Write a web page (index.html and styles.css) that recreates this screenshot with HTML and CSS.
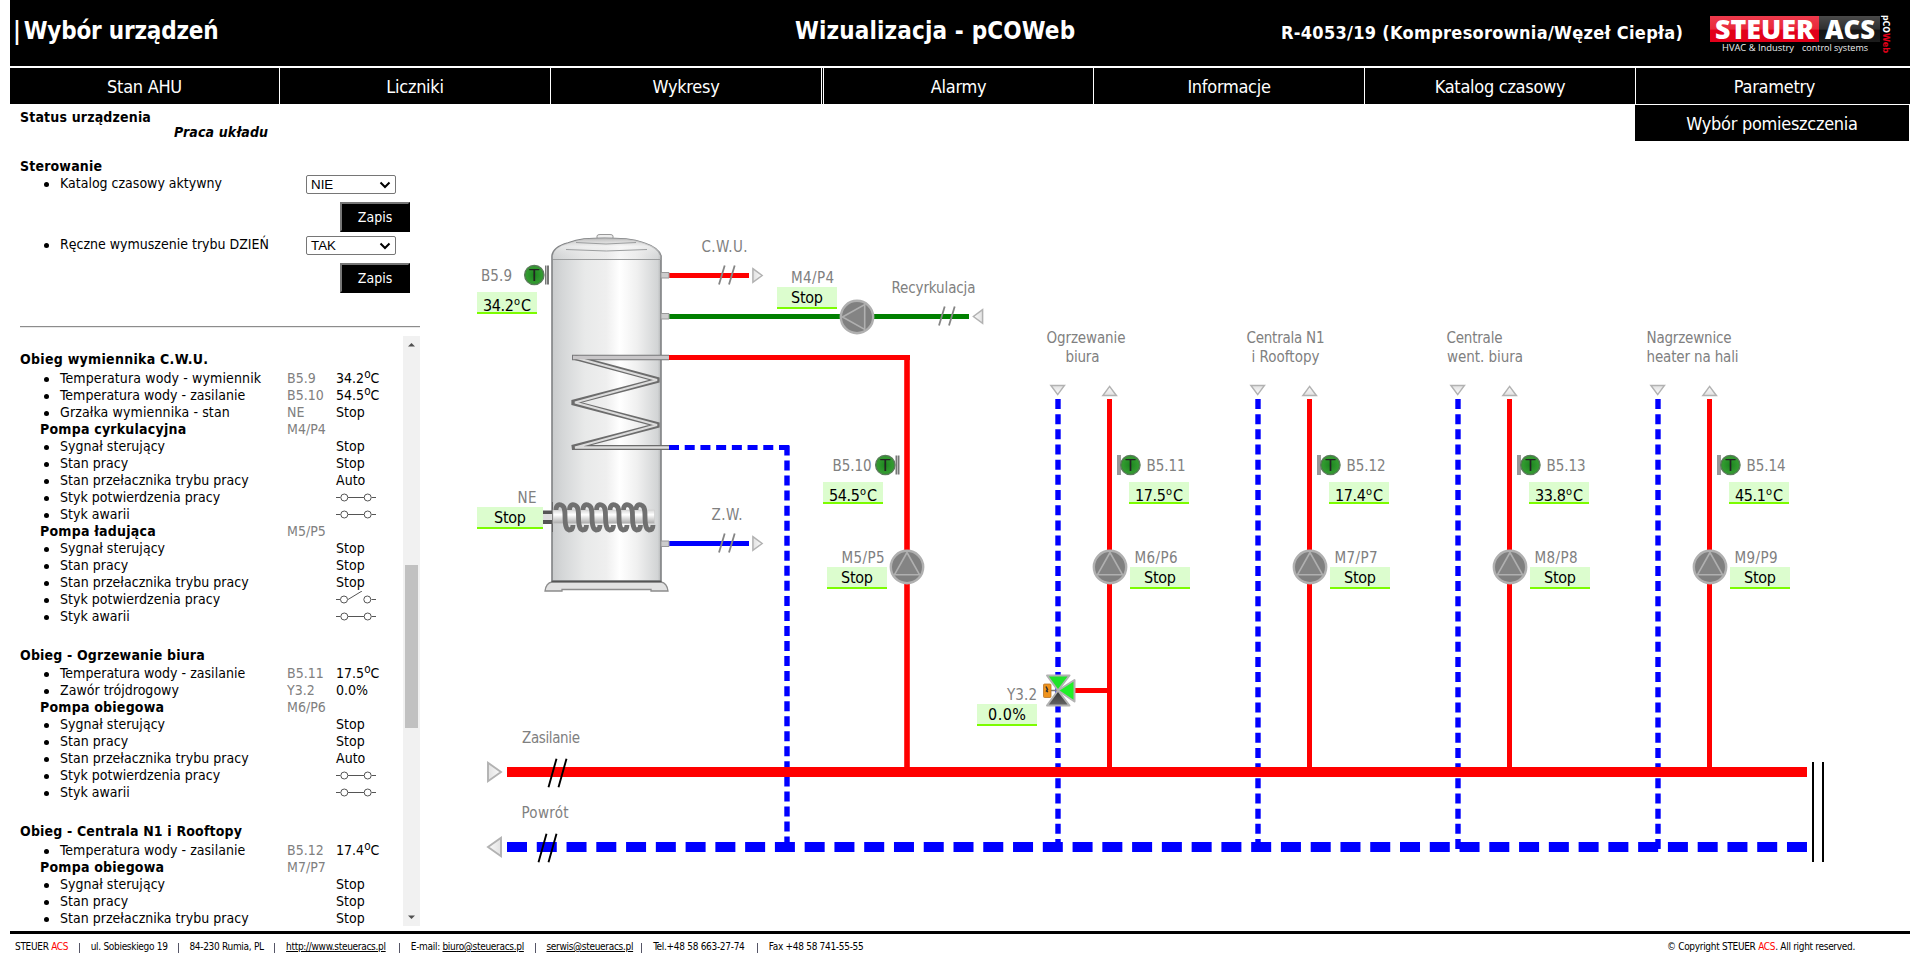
FILE: index.html
```html
<!DOCTYPE html>
<html lang="pl">
<head>
<meta charset="utf-8">
<title>Wizualizacja - pCOWeb</title>
<link rel="stylesheet" href="styles.css">
</head>
<body>
<header class="top">
  <div class="top-left"><span class="pipe">|</span>Wybór urządzeń</div>
  <div class="top-title">Wizualizacja - pCOWeb</div>
  <div class="top-device">R-4053/19 (Kompresorownia/Węzeł Ciepła)</div>
  <svg class="logo" width="190" height="46" viewBox="1705 11 190 46">
    <defs>
      <linearGradient id="lr" x1="0" y1="0" x2="0" y2="1"><stop offset="0" stop-color="#ee3a4c"/><stop offset=".5" stop-color="#e8293b"/><stop offset=".55" stop-color="#e2001a"/><stop offset="1" stop-color="#e2001a"/></linearGradient>
      <linearGradient id="lb" x1="0" y1="0" x2="0" y2="1"><stop offset="0" stop-color="#4a4a4a"/><stop offset=".5" stop-color="#303030"/><stop offset=".55" stop-color="#151515"/><stop offset="1" stop-color="#1c1c1c"/></linearGradient>
    </defs>
    <rect x="1710" y="16" width="109" height="26" fill="url(#lr)"/>
    <rect x="1819" y="16" width="61" height="26" fill="url(#lb)"/>
    <text class="logo-name" x="1715" y="38.5" textLength="99" lengthAdjust="spacingAndGlyphs">STEUER</text>
    <text class="logo-name" x="1825" y="38.5" textLength="50" lengthAdjust="spacingAndGlyphs">ACS</text>
    <text class="logo-sub" x="1722" y="50.5" textLength="72" lengthAdjust="spacingAndGlyphs">HVAC &amp; Industry</text>
    <text class="logo-sub" x="1802" y="50.5" textLength="66" lengthAdjust="spacingAndGlyphs">control systems</text>
    <text class="logo-web" transform="translate(1882.5 15) rotate(90)"><tspan textLength="18" lengthAdjust="spacingAndGlyphs">pCO</tspan><tspan fill="#e2001a" textLength="20" lengthAdjust="spacingAndGlyphs">Web</tspan></text>
  </svg>
</header>
<nav class="menu">
  <a class="m1">Stan AHU</a><a>Liczniki</a><a>Wykresy</a><a class="m4">Alarmy</a><a>Informacje</a><a>Katalog czasowy</a><a class="m7">Parametry</a>
  <a class="submenu">Wybór pomieszczenia</a>
</nav>
<main class="main">
  <aside class="side">
    <section class="control">
      <h2>Status urządzenia</h2>
      <p class="status">Praca układu</p>
      <h2 class="ster">Sterowanie</h2>
      <div class="ctl"><span class="dot"></span><label>Katalog czasowy aktywny</label><span class="select">NIE<svg width="12" height="8" viewBox="0 0 12 8"><path d="M1.5 1.5 6 6l4.500-4.500" fill="none" stroke="#000" stroke-width="2"/></svg></span></div>
      <button class="save">Zapis</button>
      <div class="ctl"><span class="dot"></span><label>Ręczne wymuszenie trybu DZIEŃ</label><span class="select">TAK<svg width="12" height="8" viewBox="0 0 12 8"><path d="M1.5 1.5 6 6l4.500-4.500" fill="none" stroke="#000" stroke-width="2"/></svg></span></div>
      <button class="save">Zapis</button>
    </section>
    <hr class="rule">
    <div class="scroll">
      <div class="list">
        <h3>Obieg wymiennika C.W.U.</h3>
        <div class="row temp"><span class="wide">Temperatura wody - wymiennik</span><i>B5.9</i><b>34.2<sup>o</sup>C</b></div>
        <div class="row"><span>Temperatura wody - zasilanie</span><i>B5.10</i><b>54.5<sup>o</sup>C</b></div>
        <div class="row"><span class="wide">Grzałka wymiennika - stan</span><i>NE</i><b>Stop</b></div>
        <div class="row pump"><span>Pompa cyrkulacyjna</span><i>M4/P4</i></div>
        <div class="row"><span>Sygnał sterujący</span><i></i><b>Stop</b></div>
        <div class="row"><span>Stan pracy</span><i></i><b>Stop</b></div>
        <div class="row"><span>Stan przełacznika trybu pracy</span><i></i><b>Auto</b></div>
        <div class="row"><span>Styk potwierdzenia pracy</span><i></i><svg class="sw"><use href="#closed"/></svg></div>
        <div class="row"><span>Styk awarii</span><i></i><svg class="sw"><use href="#closed"/></svg></div>
        <div class="row pump"><span>Pompa ładująca</span><i>M5/P5</i></div>
        <div class="row"><span>Sygnał sterujący</span><i></i><b>Stop</b></div>
        <div class="row"><span>Stan pracy</span><i></i><b>Stop</b></div>
        <div class="row"><span>Stan przełacznika trybu pracy</span><i></i><b>Stop</b></div>
        <div class="row"><span>Styk potwierdzenia pracy</span><i></i><svg class="sw"><use href="#open"/></svg></div>
        <div class="row"><span>Styk awarii</span><i></i><svg class="sw"><use href="#closed"/></svg></div>
        <h3>Obieg - Ogrzewanie biura</h3>
        <div class="row heat"><span>Temperatura wody - zasilanie</span><i>B5.11</i><b>17.5<sup>o</sup>C</b></div>
        <div class="row"><span>Zawór trójdrogowy</span><i>Y3.2</i><b>0.0%</b></div>
        <div class="row pump"><span>Pompa obiegowa</span><i>M6/P6</i></div>
        <div class="row"><span>Sygnał sterujący</span><i></i><b>Stop</b></div>
        <div class="row"><span>Stan pracy</span><i></i><b>Stop</b></div>
        <div class="row"><span>Stan przełacznika trybu pracy</span><i></i><b>Auto</b></div>
        <div class="row"><span>Styk potwierdzenia pracy</span><i></i><svg class="sw"><use href="#closed"/></svg></div>
        <div class="row"><span>Styk awarii</span><i></i><svg class="sw"><use href="#closed"/></svg></div>
        <h3>Obieg - Centrala N1 i Rooftopy</h3>
        <div class="row temp"><span>Temperatura wody - zasilanie</span><i>B5.12</i><b>17.4<sup>o</sup>C</b></div>
        <div class="row pump"><span>Pompa obiegowa</span><i>M7/P7</i></div>
        <div class="row"><span>Sygnał sterujący</span><i></i><b>Stop</b></div>
        <div class="row"><span>Stan pracy</span><i></i><b>Stop</b></div>
        <div class="row"><span>Stan przełacznika trybu pracy</span><i></i><b>Stop</b></div>
      </div>
      <div class="bar">
        <svg width="17" height="17"><path d="M5 10.500 8.500 7 12 10.500z" fill="#505050"/></svg>
        <div class="thumb"></div>
        <svg width="17" height="17"><path d="M5 6.500 8.500 10 12 6.500z" fill="#505050"/></svg>
      </div>
    </div>
  </aside>
  <svg class="scheme" width="1480" height="827" viewBox="430 104 1480 827">
    <defs>
      <linearGradient id="body"><stop offset="0" stop-color="#c9cbcc"/><stop offset=".1" stop-color="#d5d7d8"/><stop offset=".3" stop-color="#e8e9e9"/><stop offset=".5" stop-color="#efefef"/><stop offset=".62" stop-color="#ffffff"/><stop offset=".78" stop-color="#f0f0f0"/><stop offset=".97" stop-color="#d2d4d5"/><stop offset="1" stop-color="#b5b7b8"/></linearGradient>
      <linearGradient id="domeg" x1="0" y1="0" x2="0" y2="1"><stop offset="0" stop-color="#bbb"/><stop offset=".4" stop-color="#f2f2f2" stop-opacity=".6"/><stop offset="1" stop-color="#ddd" stop-opacity=".2"/></linearGradient>
      <linearGradient id="rod" x1="0" y1="0" x2="0" y2="1"><stop offset="0" stop-color="#d8d8d8"/><stop offset=".35" stop-color="#fff"/><stop offset="1" stop-color="#aaa"/></linearGradient>
      <radialGradient id="green"><stop offset="0" stop-color="#1b861f"/><stop offset=".8" stop-color="#339a30"/><stop offset="1" stop-color="#2f8f2f"/></radialGradient>
      <linearGradient id="arrow"><stop offset="0" stop-color="#e2e2e2"/><stop offset="1" stop-color="#fafafa"/></linearGradient>
      <linearGradient id="dark" x1="0" y1="0" x2="0" y2="1"><stop offset="0" stop-color="#333"/><stop offset="1" stop-color="#666"/></linearGradient>
      <g id="pump"><circle r="16.200" fill="#808080" stroke="#b0b0b0" stroke-width="2.400"/><path d="M0-14.500 12.500 7.700h-25z" fill="#848484" stroke="#b0b0b0" stroke-width="1.600"/></g>
      <g id="probe"><circle r="9.700" fill="url(#green)" stroke="#5c7a5c" stroke-width="1.300"/><text class="t" x="-5" y="5.500" textLength="10" lengthAdjust="spacingAndGlyphs">T</text></g>
      <path id="tri" d="M-4.600-6.800 4.600 0-4.600 6.800z" fill="url(#arrow)" stroke="#b2b2b2" stroke-width="1.500"/>
      <path id="tribig" d="M-6.500-9.200 6.500 0-6.500 9.200z" fill="url(#arrow)" stroke="#b2b2b2" stroke-width="1.900"/>
      <path id="cut" d="M-8 9.500-2.300-9.500M2 9.500 7.700-9.500" stroke="#858585" stroke-width="1.800"/>
      <path id="cutbig" d="M-9 14.300-1 -14.300M1 14.300 9-14.300" stroke="#000" stroke-width="1.900"/>
      <g id="value"><rect width="60" height="22" fill="#dcfdce"/><rect y="20" width="60" height="2" fill="#7cfc00"/></g>
      <path id="loop" d="M0 6c0-5 3-6 5-5 4 1 4 6 4 11 0 9 1 13 4 14 3 0 4-2 4-5" fill="none"/>
      <symbol id="closed" viewBox="0 0 40 17"><path d="M0 8.500h4.500M12 8.500h16M35.500 8.500H40" stroke="#555"/><g fill="#fff" stroke="#555"><circle cx="8.300" cy="8.500" r="3.500"/><circle cx="31.700" cy="8.500" r="3.500"/></g></symbol>
      <symbol id="open" viewBox="0 0 40 17"><path d="M0 8.500h4.500M12 8.500 26 0M35.500 8.500H40" stroke="#555"/><g fill="#fff" stroke="#555"><circle cx="8" cy="8.500" r="3.500"/><circle cx="31.300" cy="8.500" r="3.500"/></g></symbol>
    </defs>

    <!-- pipes -->
    <g fill="none" stroke-width="5.400">
      <g stroke="#00f" stroke-dasharray="10 5.172">
        <path d="M1058 399v450.500M1258 399v450.500M1458 399v450.500M1658 399v450.500"/>
        <path d="M787 445.500v401" stroke-dasharray="10 5.040"/>
        <path d="M669 447.500h120" stroke-width="5" stroke-dasharray="10 5.714"/>
        <path d="M507 847h1300" stroke-width="10" stroke-dasharray="20 9.767"/>
      </g>
      <g stroke="red" stroke-width="5">
        <path d="M669 275.500h80M669 357.500h241M1075 690.500h35"/>
        <path d="M907 355v413" stroke-width="5.600"/>
        <path d="M1109.500 399v370M1309.500 399v370M1509.500 399v370M1709.500 399v370"/>
        <path d="M507 772h1300" stroke-width="10"/>
      </g>
      <path d="M669 316.500h300" stroke="green" stroke-width="5"/>
      <path d="M669 543.500h80" stroke="#00f" stroke-width="5"/>
      <path d="M1813 762v100M1823 762v100" stroke="#000" stroke-width="2"/>
    </g>
    <use href="#cut" x="727" y="275"/><use href="#cut" x="947" y="316"/><use href="#cut" x="727" y="543"/>
    <use href="#cutbig" x="557.500" y="773"/><use href="#cutbig" x="547.500" y="848"/>
    <use href="#tri" x="757.500" y="275.500"/><use href="#tri" x="757.500" y="543.500"/>
    <use href="#tri" transform="translate(978 316.500) scale(-1 1)"/>
    <use href="#tribig" x="494.500" y="772"/><use href="#tribig" transform="translate(494.500 847) scale(-1 1)"/>
    <g id="heads">
      <use href="#tri" transform="translate(1057.700 390) rotate(90)"/>
      <use href="#tri" transform="translate(1109.600 391) rotate(-90)"/>
    </g>
    <use href="#heads" x="200"/><use href="#heads" x="400"/><use href="#heads" x="600"/>

    <!-- tank -->
    <g stroke="#777" stroke-width="1">
      <path d="M545 591q1-8 7-9h109q6 1 7 9h-17v-1.500h-89V591z" fill="#e2e2e2" stroke="#8c8c8c" stroke-width="1.300"/>
      <path d="M597 241v-5q0-1.500 3-1.500h10q3 0 3 1.500v5z" fill="#eee" stroke="#999"/>
      <path d="M552 581V256q1-9 16-13 8-3 16-4 20-1.500 42 0 10 1 18 4 15 5 17 13v325z" fill="url(#body)" stroke="#808284" stroke-width="1.600"/>
      <path d="M552.500 259V256q1-9 16-13 8-3 16-4 20-1.500 42 0 10 1 18 4 15 5 16.500 13v3z" fill="url(#domeg)" stroke="none"/>
      <path d="M566 249.500q40 3 81 0M576 242.500q30 3 60 0M553 259.500h108" fill="none" stroke="#9c9e9f"/>
      <path d="M551.500 581.500h110" stroke="#555" stroke-width="1.600"/>
      <path d="M661 272.500h8v5.500h-8zM661 313.500h8v5.500h-8zM661 541h8v5.500h-8z" fill="#ccc" stroke="#999"/>
      <g fill="none" stroke-linejoin="bevel">
        <path d="M572 357.500h97" stroke="#77777a" stroke-width="5.500"/>
        <path d="M575 357.500 659 380 572 402.500 659 425 572 447.500h97" stroke="#6c6c6c" stroke-width="5"/>
        <path d="M575 357.500 657 380 575 402.500 657 425 575 447.500h94" stroke="#dcdcdc" stroke-width="2.300"/>
        <path d="M573 357.500h96" stroke="#c8c6c8" stroke-width="3.400"/>
      </g>
      <path d="M543 510.500h9v4.500h-9zM543 519.500h9v4.500h-9z" fill="#555" stroke="none"/>
      <rect x="543" y="514" width="10" height="6" fill="#ddd" stroke="none"/>
      <path d="M552.500 502v30" stroke="#666"/>
      <rect x="553" y="510" width="101.500" height="13.500" fill="url(#rod)" stroke="#ccc" stroke-width=".6"/>
      <g stroke="#707070" stroke-width="4.800" stroke-linecap="butt">
        <use href="#loop" x="556" y="504"/><use href="#loop" x="569.500" y="504"/><use href="#loop" x="583" y="504"/><use href="#loop" x="596.500" y="504"/><use href="#loop" x="610" y="504"/><use href="#loop" x="623.500" y="504"/><use href="#loop" x="636" y="504"/>
      </g>
    </g>

    <!-- probes -->
    <path d="M545 265.500h1.500v19h-1.500zM547 265.500h2v19h-2z" fill="#777"/><use href="#probe" x="534.300" y="275"/>
    <path d="M895.500 455.500h1.500v19h-1.500zM897.500 455.500h2v19h-2z" fill="#777"/><use href="#probe" x="885.300" y="465"/>
    <g id="sensor"><rect x="1117" y="455" width="4" height="20" fill="#999"/><use href="#probe" x="1130.400" y="465"/></g>
    <use href="#sensor" x="200"/><use href="#sensor" x="400"/><use href="#sensor" x="600"/>

    <!-- pumps -->
    <use href="#pump" transform="translate(857 317) rotate(-90)"/>
    <use href="#pump" x="907" y="567"/><use href="#pump" x="1110" y="567"/><use href="#pump" x="1310" y="567"/><use href="#pump" x="1510" y="567"/><use href="#pump" x="1710" y="567"/>

    <!-- three-way valve -->
    <path d="M1050 690.500h8" stroke="#777" stroke-width="1.500"/>
    <rect x="1043.500" y="684" width="7.500" height="13.500" rx="1" fill="#ef931d" stroke="#b87528" stroke-width=".8"/>
    <path d="M1046 686.500l1.500 3-1 1.500 1.500 1" fill="none" stroke="#333" stroke-width="1.500"/>
    <g stroke="#b2b2b2" stroke-width="2" stroke-linejoin="round">
      <path d="M1047 675.500h22.500L1058 690.500z" fill="#20e32a"/>
      <path d="M1074.500 680v21.500L1058 690.500z" fill="#20f028"/>
      <path d="M1047 705.500h22.500L1058 690.500z" fill="url(#dark)"/>
    </g>

    <!-- values -->
    <g class="val">
      <use href="#value" x="477" y="292"/><text x="483" y="310.500" textLength="31">34.2</text><text class="o" x="514" y="305" textLength="7">o</text><text x="521" y="310.500" textLength="11">C</text>
      <rect x="477" y="507" width="66" height="22" fill="#dcfdce"/><rect x="477" y="527" width="66" height="2" fill="#7cfc00"/><text x="494" y="523" textLength="32">Stop</text>
      <use href="#value" x="777" y="287"/><text x="791" y="303" textLength="32">Stop</text>
      <use href="#value" x="823" y="482"/><text x="829" y="500.500" textLength="31">54.5</text><text class="o" x="860" y="495" textLength="7">o</text><text x="867" y="500.500" textLength="11">C</text>
      <use href="#value" x="827" y="567"/><text x="841" y="583" textLength="32">Stop</text>
      <use href="#value" x="977" y="704"/><text x="988" y="720" textLength="38">0.0%</text>
      <use href="#value" x="1129" y="482"/><text x="1135" y="500.500" textLength="31">17.5</text><text class="o" x="1166" y="495" textLength="7">o</text><text x="1173" y="500.500" textLength="11">C</text>
      <use href="#value" x="1329" y="482"/><text x="1335" y="500.500" textLength="31">17.4</text><text class="o" x="1366" y="495" textLength="7">o</text><text x="1373" y="500.500" textLength="11">C</text>
      <use href="#value" x="1529" y="482"/><text x="1535" y="500.500" textLength="31">33.8</text><text class="o" x="1566" y="495" textLength="7">o</text><text x="1573" y="500.500" textLength="11">C</text>
      <use href="#value" x="1729" y="482"/><text x="1735" y="500.500" textLength="31">45.1</text><text class="o" x="1766" y="495" textLength="7">o</text><text x="1773" y="500.500" textLength="11">C</text>
      <use href="#value" x="1130" y="567"/><text x="1144" y="583" textLength="32">Stop</text>
      <use href="#value" x="1330" y="567"/><text x="1344" y="583" textLength="32">Stop</text>
      <use href="#value" x="1530" y="567"/><text x="1544" y="583" textLength="32">Stop</text>
      <use href="#value" x="1730" y="567"/><text x="1744" y="583" textLength="32">Stop</text>
    </g>

    <!-- labels -->
    <g class="lab">
      <text x="701.500" y="252" textLength="46">C.W.U.</text>
      <text x="481" y="281" textLength="31">B5.9</text>
      <text x="517.500" y="503" textLength="19">NE</text>
      <text x="711.500" y="520" textLength="31">Z.W.</text>
      <text x="791" y="283" textLength="43">M4/P4</text>
      <text x="891.500" y="293" textLength="84">Recyrkulacja</text>
      <text x="832.500" y="471" textLength="39">B5.10</text>
      <text x="841.500" y="563" textLength="43">M5/P5</text>
      <text x="1007" y="700" textLength="30">Y3.2</text>
      <text x="522" y="743" textLength="58">Zasilanie</text>
      <text x="521.500" y="818" textLength="47">Powrót</text>
      <text x="1046.500" y="343" textLength="79">Ogrzewanie</text><text x="1065.500" y="362" textLength="34">biura</text>
      <text x="1246.500" y="343" textLength="78">Centrala N1</text><text x="1251.500" y="362" textLength="68">i Rooftopy</text>
      <text x="1446.500" y="343" textLength="56">Centrale</text><text x="1447" y="362" textLength="76">went. biura</text>
      <text x="1646.500" y="343" textLength="85">Nagrzewnice</text><text x="1646.500" y="362" textLength="92">heater na hali</text>
      <text x="1146.500" y="471" textLength="39">B5.11</text><text x="1346.500" y="471" textLength="39">B5.12</text><text x="1546.500" y="471" textLength="39">B5.13</text><text x="1746.500" y="471" textLength="39">B5.14</text>
      <text x="1134.500" y="563" textLength="43">M6/P6</text><text x="1334.500" y="563" textLength="43">M7/P7</text><text x="1534.500" y="563" textLength="43">M8/P8</text><text x="1734.500" y="563" textLength="43">M9/P9</text>
    </g>
  </svg>
</main>
<footer class="foot">
  <div class="contacts"><span class="f1">STEUER <em>ACS</em></span><s></s><span class="f2">ul. Sobieskiego 19</span><s></s><span class="f3">84-230 Rumia, PL</span><s></s><span class="f4"><u>http://www.steueracs.pl</u></span><s></s><span class="f5">E-mail: <u>biuro@steueracs.pl</u></span><s></s><span class="f6"><u>serwis@steueracs.pl</u></span><s></s><span class="f7">Tel.+48 58 663-27-74</span><s></s><span class="f8">Fax +48 58 741-55-55</span></div>
  <div class="copy">© Copyright STEUER <em>ACS</em>. All right reserved.</div>
</footer>
</body>
</html>
```

FILE: styles.css
```css
* { box-sizing: border-box; }
body { margin: 0 10px; width: 1900px; height: 960px; overflow: hidden; background: #fff; color: #000; font-family: "DejaVu Sans Condensed", "DejaVu Sans", sans-serif; font-stretch: condensed; }
h2, h3, p { margin: 0; }

/* header */
.top { height: 66px; background: #000; color: #fff; font-weight: bold; font-size: 24px; display: grid; grid-template-columns: 785px 486px 424px 1fr; line-height: 62px; white-space: nowrap; }
.top-left { padding-left: 3px; letter-spacing: -.2px; }
.pipe { margin-right: 3px; }
.top-title { letter-spacing: .15px; }
.top-device { font-size: 18px; line-height: 65px; letter-spacing: .3px; }
.logo { margin-top: 11px; }
.logo-name { font: 800 27px "Open Sans", sans-serif; fill: #fff; }
.logo-sub { font: 8.500px "Open Sans", sans-serif; fill: #eee; }
.logo-web { font: bold 9px "DejaVu Sans", sans-serif; fill: #fff; }

.menu { position: relative; margin-top: 2px; height: 36px; background: #000; display: grid; grid-template-columns: 270px 271px 271px 272px 271px 271px 274px; }
.menu a { border-right: 1px solid #fff; color: #fff; font-size: 18px; line-height: 37px; text-align: center; letter-spacing: -.28px; white-space: nowrap; }
.menu .m4 { margin-left: 1px; border-left: 1px solid #fff; }
.menu .m7 { border-right: 0; padding-left: 3px; }
.menu .submenu { position: absolute; left: 1625px; top: 37px; width: 274px; height: 36px; background: #000; border: 0; }

/* body */
.main { display: flex; height: 827px; }
.side { width: 420px; padding-left: 10px; font-size: 14px; line-height: 17px; }
.scheme { display: block; flex: none; }
.control { height: 222px; padding-top: 5px; }
.control h2, .list h3 { font-size: 14px; line-height: 17px; white-space: nowrap; letter-spacing: .17px; }
.control .status { padding-left: 154px; line-height: 15px; font-weight: bold; font-style: italic; letter-spacing: .15px; margin-top: -1px; }
.control .ster { margin-top: 18px; }
.ctl { display: grid; grid-template-columns: 40px 246px 90px; height: 26px; white-space: nowrap; }
.ctl + .save { margin-top: 1px; }
.dot, .row:not(.pump)::before { content: ""; width: 5px; height: 5px; border-radius: 50%; background: #000; }
.dot { margin: 7px 0 0 24px; }
.select { height: 19px; border: 1px solid #767676; border-radius: 2px; font: 13.333px/17px "Liberation Sans", Arial, sans-serif; letter-spacing: 0; padding: 0 4px; display: flex; justify-content: space-between; align-items: center; }
.save { display: block; width: 70px; height: 30px; margin: 4px 0 4px 320px; background: #000; color: #fff; border: 2px outset #767676; border-color: #767676 #222 #222 #767676; font: 14px "DejaVu Sans Condensed", "DejaVu Sans", sans-serif; padding: 0; }
.rule { margin: 0 0 8px; width: 400px; border: 0; height: 2px; border-top: 1px solid #8c8c8c; border-bottom: 1px solid #e8e8e8; }

.scroll { display: flex; width: 400px; height: 590px; overflow: hidden; }
.list { width: 383px; }
.list h3 { margin-top: 22px; }
.list h3:first-child { margin-top: 15px; letter-spacing: .28px; }
.row { display: grid; grid-template-columns: 40px 227px 49px 1fr; height: 17px; white-space: nowrap; letter-spacing: .02px; }
.row::before { margin: 7px 0 0 24px; }
.wide { letter-spacing: .12px; }
.temp { margin-top: 2px; }
.heat { margin-top: 1px; }
.row i { font-style: normal; color: #808080; }
.row b { font-weight: normal; }
.row sup { font-size: 11.700px; line-height: 0; vertical-align: 5px; }
.pump { grid-template-columns: 247px 49px 1fr; padding-left: 20px; }
.pump span { font-weight: bold; letter-spacing: .22px; }
.sw { width: 40px; height: 17px; display: block; }
.bar { width: 17px; background: #f1f1f1; }
.bar svg { display: block; }
.thumb { width: 13px; height: 163px; margin: 212px 0 181px 2px; background: #c1c1c1; }

/* diagram */
.scheme text { font-family: "DejaVu Sans Condensed", "DejaVu Sans", sans-serif; }
.lab { font-size: 15px; fill: #808080; }
.val { font-size: 16px; }
.val .o { font-size: 11px; }
.scheme .t { font-size: 15px; fill: #222; }

/* footer */
.foot { border-top: 3px solid #000; height: 29px; display: flex; justify-content: space-between; font-size: 10px; line-height: 26px; padding: 0 55px 0 5px; white-space: nowrap; letter-spacing: -.3px; }
.foot em { font-style: normal; color: red; }
.contacts { display: flex; }
.contacts s { width: 1px; height: 10px; background: #556; margin: 9px 10.700px 0 10px; }
.f1 { width: 54px; } .f2 { width: 77px; } .f3 { width: 75px; } .f4 { width: 103px; } .f5 { width: 114px; } .f6 { width: 85px; } .f7 { width: 94px; } .f8 { width: 95px; }
```
